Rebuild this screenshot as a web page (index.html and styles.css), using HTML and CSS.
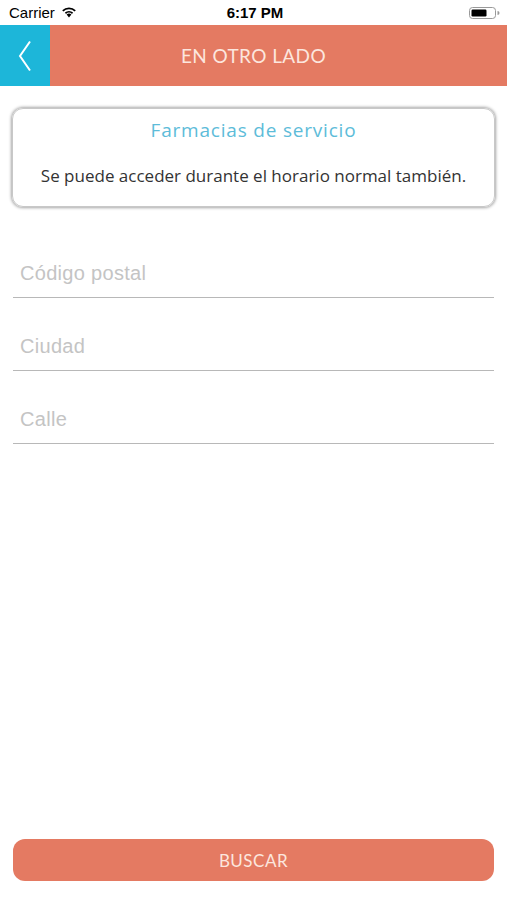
FILE: index.html
```html
<!DOCTYPE html>
<html>
<head>
<meta charset="utf-8">
<link rel="stylesheet" href="styles.css">
</head>
<body>
<div class="screen">
  <div class="status">
    <div class="status-left">
      <span>Carrier</span>
      <svg class="wifi" width="16" height="12" viewBox="0 0 16 12"><path d="M8 11.5 L5.6 8.6 A3.6 3.6 0 0 1 10.4 8.6 Z" fill="#000"/><path d="M3.9 6.6 A6 6 0 0 1 12.1 6.6 L11 7.9 A4.3 4.3 0 0 0 5 7.9 Z" fill="#000"/><path d="M1.2 4.3 A9.6 9.6 0 0 1 14.8 4.3 L13.6 5.6 A7.8 7.8 0 0 0 2.4 5.6 Z" fill="#000"/></svg>
    </div>
    <div class="status-time">6:17 PM</div>
    <div class="status-right">
      <svg width="32" height="14" viewBox="0 0 32 14"><rect x="0.5" y="1.5" width="26" height="11" rx="3" fill="none" stroke="#999" stroke-width="1"/><rect x="2.5" y="3.5" width="15" height="7" rx="1.2" fill="#000"/><path d="M28.5 5 a1.8 1.8 0 0 1 0 4 z" fill="#999"/></svg>
    </div>
  </div>
  <div class="navbar">
    <div class="back">
      <svg width="14" height="32" viewBox="0 0 14 32"><path d="M12 1.5 L2 16 L12 30.5" fill="none" stroke="#fff" stroke-width="2"/></svg>
    </div>
    <div class="nav-title">EN OTRO LADO</div>
  </div>
  <div class="content">
    <div class="card">
      <div class="card-title">Farmacias de servicio</div>
      <div class="card-text">Se puede acceder durante el horario normal también.</div>
    </div>
    <div class="fields">
      <div class="field">Código postal</div>
      <div class="field">Ciudad</div>
      <div class="field">Calle</div>
    </div>
    <div class="spacer"></div>
    <div class="button">BUSCAR</div>
  </div>
</div>
</body>
</html>
```

FILE: styles.css
```css
html, body {
  margin: 0;
  padding: 0;
  background: #fff;
}
.screen {
  width: 507px;
  height: 900px;
  display: flex;
  flex-direction: column;
  font-family: "Liberation Sans", Arial, sans-serif;
}
.status {
  height: 25px;
  display: flex;
  align-items: center;
  justify-content: space-between;
  padding: 0 6px 0 9px;
  font-size: 15px;
  color: #000;
}
.status-left {
  display: flex;
  align-items: center;
  gap: 6px;
  width: 100px;
}
.wifi { margin-top: -2px; }
.status-time {
  font-weight: bold;
  font-size: 15px;
}
.status-right {
  width: 100px;
  display: flex;
  justify-content: flex-end;
}
.navbar {
  height: 61px;
  display: flex;
  background: #E47A62;
}
.back {
  width: 50px;
  background: #1DB6D9;
  display: flex;
  align-items: center;
  justify-content: center;
  box-sizing: border-box;
}
.nav-title {
  flex: 1;
  display: flex;
  align-items: center;
  justify-content: center;
  color: #FCE6DE;
  font-family: "Lato", "Liberation Sans", sans-serif;
  font-size: 19px;
  letter-spacing: 0.4px;
  padding-right: 50px;
}
.content {
  flex: 1;
  display: flex;
  flex-direction: column;
  padding: 22px 13px 19px 13px;
}
.card {
  margin: 0 -1px;
  height: 99px;
  box-sizing: border-box;
  border: 1px solid #c8c8c8;
  border-radius: 11px;
  box-shadow: 0 0 3px 1px rgba(0,0,0,0.35);
  display: flex;
  flex-direction: column;
  align-items: center;
  padding-top: 8px;
}
.card-title {
  color: #5DBCD9;
  font-family: "Open Sans", "Liberation Sans", sans-serif;
  font-size: 19px;
  letter-spacing: 0.8px;
}
.card-text {
  margin-top: 21px;
  color: #333;
  font-family: "Open Sans", "Liberation Sans", sans-serif;
  font-size: 17px;
}
.fields {
  margin-top: 56px;
  display: flex;
  flex-direction: column;
  gap: 38px;
}
.field {
  height: 35px;
  box-sizing: border-box;
  border-bottom: 1px solid #b8b8b8;
  color: #c4c4c4;
  font-size: 20px;
  letter-spacing: 0.3px;
  padding-left: 7px;
  line-height: 20px;
}
.spacer { flex: 1; }
.button {
  height: 42px;
  border-radius: 12px;
  background: #E47A62;
  color: #FCE6DE;
  display: flex;
  align-items: center;
  justify-content: center;
  font-family: "Lato", "Liberation Sans", sans-serif;
  font-size: 17px;
  letter-spacing: 0.5px;
}
```
